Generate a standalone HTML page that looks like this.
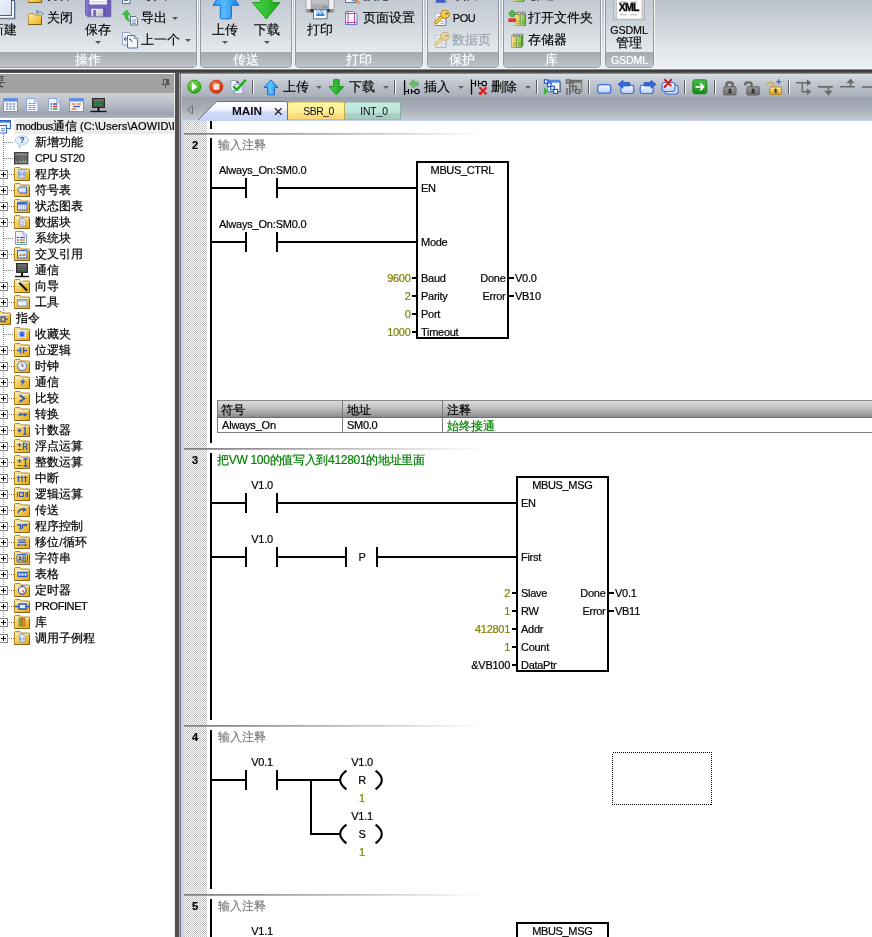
<!DOCTYPE html>
<html lang="zh">
<head>
<meta charset="utf-8">
<title>STEP 7-Micro/WIN SMART</title>
<style>
*{box-sizing:border-box;margin:0;padding:0}
html,body{width:872px;height:937px;overflow:hidden;background:#fff}
body{position:relative;font-family:"Liberation Sans",sans-serif;font-size:12px;color:#000}
.abs{position:absolute}
/* ---------- ribbon ---------- */
#ribbon{position:absolute;left:0;top:0;width:872px;height:69px;background:linear-gradient(to bottom,#bcc2cc 0,#cdd3da 24px,#e2e8eb 50px,#e9eff0 64px,#eef2f3 68px)}
.grp{position:absolute;top:-4px;height:72px;border:1px solid #9299a1;border-radius:0 0 4px 4px;background:linear-gradient(to bottom,#c2c8d1 0,#d1d7dd 28px,#e5eaed 55px);overflow:hidden;box-shadow:1px 0 0 #f4f7f8,-1px 0 0 #eef2f4,0 1px 0 #f4f7f8}
.grp .lbl{position:absolute;left:0;right:0;top:55px;height:16px;background:linear-gradient(to bottom,#a4a9ae 0,#b3b8bd 8px,#c1c5c9 16px);color:#fff;font-size:13px;line-height:16px;text-align:center;text-shadow:0 0 1px #e8ecef}
.rt{position:absolute;font-size:13px;line-height:15px;white-space:nowrap;color:#000;-webkit-text-stroke-width:.15px}
.dd{position:absolute;width:0;height:0;border-left:3px solid transparent;border-right:3px solid transparent;border-top:3px solid #555}
.ddw{position:absolute;width:0;height:0;border-left:3px solid transparent;border-right:3px solid transparent;border-top:3px solid #fff}
#rbar{position:absolute;left:0;top:69px;width:872px;height:4px;background:linear-gradient(to bottom,#8c8c8c 0 1px,#3c3c3c 1px 2px,#424242 2px 3px,#565656 3px 4px)}
/* ---------- left panel ---------- */
#lp{position:absolute;left:0;top:73px;width:175px;height:864px;background:#fff}
#lph{position:absolute;left:0;top:0;width:174px;height:20px;background:#a0a2a1;border-top:1px solid #f4f4f4}
#lpt{position:absolute;left:0;top:20px;width:174px;height:25px;background:linear-gradient(to bottom,#cdd1d7 0,#c0c5cd 8px,#a9b0ba 16px,#9ea5b0 20px,#a4abb5 23px,#b4b9c2 25px)}
#vbar{position:absolute;left:174px;top:73px;width:7px;height:864px;background:linear-gradient(to right,#e6e6e6 0 1px,#565656 1px 2px,#4d4d4d 2px 4px,#585858 4px 5px,#a2a2a2 5px 6px,#7a7a7a 6px 7px)}
.tr{position:absolute;left:0;height:16px;width:174px;white-space:nowrap;font-size:12px;line-height:16px;-webkit-text-stroke-width:.2px}
.tr .t{position:absolute;top:0;letter-spacing:-0.4px;font-size:11px}
.tr .c{position:absolute;top:0;font-size:12px;letter-spacing:0}
.pm{position:absolute;left:-1px;top:4px;width:9px;height:9px;border:1px solid #848484;background:#fff}
.pm:before{content:"";position:absolute;left:1px;top:3px;width:5px;height:1px;background:#000}
.pm:after{content:"";position:absolute;left:3px;top:1px;width:1px;height:5px;background:#000}
.hd{position:absolute;height:1px;top:8px;background-image:linear-gradient(to right,#808080 50%,transparent 50%);background-size:2px 1px}
.vd{position:absolute;width:1px;background-image:linear-gradient(to bottom,#808080 50%,transparent 50%);background-size:1px 2px}
.ic{position:absolute;left:15px;top:0;width:16px;height:16px}
/* ---------- editor ---------- */
#ed{position:absolute;left:181px;top:73px;width:691px;height:864px;background:#fff}
#tb{position:absolute;left:0;top:0;width:691px;height:47px;border-top:1px solid #85888e;box-shadow:inset 1px 0 0 rgba(255,255,255,.3);background:linear-gradient(to bottom,#dde0e5 0,#d6dae0 1px,#c9cdd5 6px,#bcc2cb 12px,#b1b7c1 18px,#aab0ba 22.5px,#9ca3ae 23.5px,#a0a7b1 29px,#a9afb9 35px,#b8bdc5 41px,#c6cad0 46px)}
.sep{position:absolute;top:6px;width:2px;height:14px;background:linear-gradient(to right,#5a5d63 50%,#f4f6f8 50%)}
.tt{position:absolute;top:5px;font-size:13px;line-height:15px;white-space:nowrap;color:#000;-webkit-text-stroke-width:.15px}
.tab{position:absolute;top:29px;height:17px;font-size:11.5px;line-height:17px;text-align:center;color:#101030}
#gut{position:absolute;left:3px;top:48px;width:23px;height:816px;background:conic-gradient(#c2c2c2 25%,#fff 0 50%,#c2c2c2 0 75%,#fff 0) 0 0/2px 2px}
#gl{position:absolute;left:0;top:47px;width:3px;height:817px;background:linear-gradient(to right,#c3d2f3 0,#c9d7f6 3px)}#bl{position:absolute;left:0;top:47px;width:691px;height:1px;background:#c3d3f5}
svg text{font-family:"Liberation Sans",sans-serif}

#lp,#ribbon,#ed,#dg{will-change:transform}

</style>
</head>
<body>
<svg width="0" height="0" style="position:absolute"><defs><linearGradient id="rfg" x1="0" y1="0" x2="1" y2="1"><stop offset="0" stop-color="#fdeaa0"/><stop offset=".5" stop-color="#f7cf5a"/><stop offset="1" stop-color="#e9ab1c"/></linearGradient><symbol id="rfold" viewBox="0 0 14 12"><path d="M.5 1.5q0-1 1-1h4l1.2 1.5h5.8q1 0 1 1v8.5H.5z" fill="url(#rfg)" stroke="#b89440" stroke-width="1"/><path d="M.5 11.5h13V4" stroke="#7a6018" stroke-width="1" fill="none"/></symbol><symbol id="kdoc" viewBox="0 0 16 16"><rect x="1.4" y="3.4" width="10.4" height="12" fill="#f7f9fd" stroke="#a9bbdc" stroke-width=".8"/><path d="M1.2 15.5h10.8V4" stroke="#5f7cae" stroke-width=".9" fill="none"/><path d="M3 6.5h4M3 9h4M6.5 11.5h3.5M6.5 13.5h3.5" stroke="#9db0d4" stroke-width=".9"/></symbol><symbol id="key" viewBox="0 0 16 16"><path d="M2.2 12.3L9 5.8" stroke="#b88208" stroke-width="3.6" stroke-linecap="round"/><path d="M2.2 12.3L9 5.8" stroke="#f8cc4c" stroke-width="2" stroke-linecap="round"/><ellipse cx="11" cy="4.3" rx="4.2" ry="3.9" fill="#f8c840" stroke="#b88208" stroke-width="1"/><path d="M8.5 3q2-2 4.5-1.3" stroke="#fdeaa0" stroke-width="1" fill="none"/><circle cx="12.5" cy="3.6" r="1" fill="#4a4a58"/></symbol><symbol id="books" viewBox="0 0 13 16"><path d="M.5 3.2h4.8v11.3H.5z" fill="#ecd070" stroke="#a88a2c" stroke-width=".7"/><path d="M.5 3.2L2 1.2h4.8L5.3 3.2z" fill="#fff" stroke="#555" stroke-width=".6"/><path d="M5.7 3.2h4.8v11.3H5.7z" fill="#92cc60" stroke="#5a8c2c" stroke-width=".7"/><path d="M5.7 3.2l1.5-2h4.8l-1.5 2z" fill="#fff" stroke="#555" stroke-width=".6"/><path d="M10.5 3.2l1.5-2v11.3l-1.5 2z" fill="#5c9a30" stroke="#4a7c24" stroke-width=".5"/><path d="M.8 10.3h4.2M.8 12.3h4.2" stroke="#b89838" stroke-width=".8"/><path d="M6 10.3h4.2M6 12.3h4.2" stroke="#64a038" stroke-width=".8"/><path d="M2.7 3l1.2-1.6M8 3l1.2-1.6" stroke="#222" stroke-width=".8"/><path d="M1.3 3.6v10.5" stroke="#f8e8a0" stroke-width=".9"/><path d="M6.5 3.6v10.5" stroke="#b8e090" stroke-width=".9"/></symbol></defs></svg>
<div id="ribbon">
<div class="grp" style="left:-3px;width:200px"><div class="lbl"><span style="position:absolute;left:60px;width:60px;text-align:center"><span>操作</span></span></div></div>
<div class="grp" style="left:200px;width:92px"><div class="lbl"><span style="position:absolute;left:15px;width:60px;text-align:center"><span>传送</span></span></div></div>
<div class="grp" style="left:295px;width:128px"><div class="lbl"><span style="position:absolute;left:32.5px;width:60px;text-align:center"><span>打印</span></span></div></div>
<div class="grp" style="left:427px;width:72px"><div class="lbl"><span style="position:absolute;left:4px;width:60px;text-align:center"><span>保护</span></span></div></div>
<div class="grp" style="left:503px;width:98px"><div class="lbl"><span style="position:absolute;left:17px;width:60px;text-align:center"><span>库</span></span></div></div>
<div class="grp" style="left:605px;width:49px"><div class="lbl"><span style="position:absolute;left:-6.5px;width:60px;text-align:center"><span style="font-size:10.6px;letter-spacing:-.1px">GSDML</span></span></div></div>
<svg class="abs" style="left:-14px;top:-10px" width="30" height="30" viewBox="0 0 30 30"><defs><linearGradient id="nd" x1="0" y1="0" x2="1" y2="1"><stop offset="0" stop-color="#ffffff"/><stop offset="1" stop-color="#d4e0f0"/></linearGradient></defs><rect x="3" y="10.5" width="25.5" height="17.8" fill="#fdfeff" stroke="#4a6282" stroke-width="1"/><rect x="0" y="0" width="25.5" height="25.5" fill="url(#nd)" stroke="#4a6282" stroke-width="1"/><path d="M29.5 12v17.3H5" stroke="#9aa2ac" stroke-width="1" fill="none" opacity=".6"/></svg>
<span class="rt" style="left:-9px;top:22px">新建</span>
<svg class="abs" style="left:28px;top:-9px" width="14" height="12" viewBox="0 0 14 12"><use href="#rfold"/></svg>
<span class="rt" style="left:47px;top:-13px">打开</span>
<svg class="abs" style="left:28px;top:13px" width="14" height="12" viewBox="0 0 14 12"><use href="#rfold"/></svg>
<svg class="abs" style="left:35px;top:9px" width="9" height="7" viewBox="0 0 9 7"><path d="M1 3h4.5q2.5 0 2.5 3" stroke="#5a7ab0" stroke-width="1" fill="none"/><path d="M3 1L1 3l2 2" stroke="#5a7ab0" stroke-width="1" fill="none"/></svg>
<span class="rt" style="left:47px;top:10px">关闭</span>
<svg class="abs" style="left:85px;top:-10px" width="27" height="28" viewBox="0 0 27 28"><defs><linearGradient id="flg" x1="0" y1="0" x2="1" y2="0"><stop offset="0" stop-color="#8a7fd0"/><stop offset=".12" stop-color="#7468c2"/><stop offset="1" stop-color="#6a5eb8"/></linearGradient><linearGradient id="shg" x1="0" y1="0" x2="1" y2="1"><stop offset="0" stop-color="#fafafa"/><stop offset="1" stop-color="#b9b9c0"/></linearGradient></defs><path d="M.4 0h25.4v26.4H2.6L.4 24.4z" fill="url(#flg)" stroke="#5d51a6" stroke-width=".8"/><rect x="4.3" y="-1" width="17.7" height="15.5" rx=".8" fill="#fbfbfd" stroke="#a9a2dc" stroke-width=".6"/><path d="M5.5 9.5h15.3M5.5 12h15.3" stroke="#c6c6cc" stroke-width="1"/><rect x="6.3" y="18.8" width="11.8" height="7.6" fill="url(#shg)"/><rect x="8.3" y="20" width="2.6" height="6.4" fill="#6f63be"/><rect x="18.6" y="19" width="2.4" height="7.4" fill="#5f54ae"/><path d="M2 27.3h24" stroke="#9a98b0" stroke-width="1" opacity=".5"/></svg>
<span class="rt" style="left:85px;top:22px">保存</span><div class="dd" style="left:95px;top:41px"></div>
<svg class="abs" style="left:122px;top:-8px" width="9" height="12" viewBox="0 0 9 12"><rect x=".5" y=".5" width="7.5" height="11" fill="#eef3fb" stroke="#5b7396"/><path d="M2 8.5h4" stroke="#5b7396"/></svg>
<span class="rt" style="left:141px;top:-13px">导入</span>
<svg class="abs" style="left:121px;top:9px" width="18" height="17" viewBox="0 0 18 17"><path d="M8 12.5C4.5 10.5 3.5 7.5 4 5L1 5.7 5.7 1 9.3 6.2 6.7 5.4C6.5 8 7 10 8.5 11.5z" fill="#3cc43c" stroke="#1f9a1f" stroke-width=".6"/><path d="M9.5 7.5h5l2 2v6.5h-7z" fill="#eef3fb" stroke="#5b7396"/><path d="M11 11h4M11 12.8h4M11 14.5h4" stroke="#7d93b5" stroke-width=".9"/></svg>
<span class="rt" style="left:141px;top:10px">导出</span><div class="dd" style="left:172px;top:16.5px"></div>
<svg class="abs" style="left:122px;top:31px" width="17" height="18" viewBox="0 0 17 18"><path d="M.5 1.5h7l3 3v9.5H.5z" fill="#f2f6fc" stroke="#8fa3c4"/><path d="M5.5 4.5h7l3 3v9.5h-10z" fill="#f6f9fd" stroke="#5b7396"/><path d="M12.5 4.5v3h3" fill="#d5dff0" stroke="#5b7396" stroke-width=".8"/><path d="M2 8h4M4 6L2 8l2 2" stroke="#3a5a90" stroke-width="1" fill="none"/><path d="M7 8q2.5 0 3 3" stroke="#3a5a90" stroke-width="1" fill="none"/></svg>
<span class="rt" style="left:141px;top:32px">上一个</span><div class="dd" style="left:185px;top:38.5px"></div>
<svg class="abs" style="left:210px;top:-10px" width="32" height="31" viewBox="0 0 32 31"><defs><linearGradient id="ub" x1="0" y1="0" x2="1" y2="0"><stop offset="0" stop-color="#2598f2"/><stop offset=".42" stop-color="#58bcff"/><stop offset="1" stop-color="#167fe6"/></linearGradient></defs><path d="M16 -4L29 15.3H21.5V27.6q0 1.3-1.3 1.3h-8.6q-1.3 0-1.3-1.3V15.3H3z" fill="url(#ub)" stroke="#1672d4" stroke-width="1"/></svg>
<span class="rt" style="left:212px;top:22px">上传</span><div class="dd" style="left:222px;top:41px"></div>
<svg class="abs" style="left:250px;top:-10px" width="32" height="31" viewBox="0 0 32 31"><defs><linearGradient id="db" x1="0" y1="0" x2="1" y2="0"><stop offset="0" stop-color="#3fd23f"/><stop offset=".5" stop-color="#35c235"/><stop offset="1" stop-color="#1f9f1f"/></linearGradient></defs><path d="M10.5 0h11.5v12.5h8L16.3 29 2.5 12.5h8z" fill="url(#db)" stroke="#1d9c1d" stroke-width="1"/></svg>
<span class="rt" style="left:254px;top:22px">下载</span><div class="dd" style="left:264px;top:41px"></div>
<svg class="abs" style="left:305px;top:-10px" width="30" height="30" viewBox="0 0 30 30"><defs><linearGradient id="prg" x1="0" y1="0" x2="0" y2="1"><stop offset="0" stop-color="#d4d4d6"/><stop offset=".7" stop-color="#bcbcbe"/><stop offset="1" stop-color="#a4a4a8"/></linearGradient></defs><rect x="1" y="0" width="28" height="22.4" rx="1.2" fill="#f1f1f3" stroke="#9c9ea6" stroke-width=".8"/><rect x="6.3" y="0" width="17.4" height="19" fill="url(#prg)"/><path d="M6.3 0v19M23.7 0v19" stroke="#8e9098" stroke-width=".8"/><rect x="6.3" y="15.3" width="17.4" height="3.7" fill="#a9a9ae"/><rect x="18" y="16.6" width="4.6" height="1.6" fill="#4d9af2"/><rect x="1.4" y="19" width="27.2" height="3.2" fill="#8c8c90"/><rect x="5.6" y="19" width="2.6" height="3.2" fill="#2c2c2e"/><rect x="21.8" y="19" width="2.6" height="3.2" fill="#2c2c2e"/><path d="M3 9.5h1.5M24.5 5.5h1.8M24.5 7.6h1.8M24.5 9.7h1.8" stroke="#b8b8be" stroke-width=".9"/><rect x="8.5" y="19.6" width="13.5" height="9.2" fill="#fbfcfe" stroke="#546c90" stroke-width="1"/><rect x="10.8" y="19.8" width="9" height="6.2" fill="#a8d8f8"/><path d="M10.8 26l2.5-3 2 1.6 2-1.8 2.5 3.2z" fill="#3f78d8"/><path d="M15.3 20.2l1 1.8 1-1.8z" fill="#f05a3c"/></svg>
<span class="rt" style="left:307px;top:22px">打印</span>
<svg class="abs" style="left:345px;top:-9px" width="16" height="13" viewBox="0 0 16 13"><rect x=".5" y=".5" width="10" height="11" fill="#f4f7fc" stroke="#5b7396"/><circle cx="9" cy="7" r="3" fill="#e8f0fa" stroke="#6a7890"/><path d="M11 9l3.5 3.5" stroke="#d89030" stroke-width="2"/></svg>
<span class="rt" style="left:363px;top:-13px">预览</span>
<svg class="abs" style="left:345px;top:11px" width="13" height="14" viewBox="0 0 13 14"><path d="M.5.5h8.5l3 3v10H.5z" fill="#fbfcfe" stroke="#6f86ac"/><path d="M3 .5v13M9.5 1.5v12M.5 2.5h10M.5 11.5h11.5" stroke="#b636b6" stroke-width=".9"/></svg>
<span class="rt" style="left:363px;top:10px">页面设置</span>
<svg class="abs" style="left:434px;top:-13px" width="16" height="16" viewBox="0 0 16 16"><use href="#kdoc"/><rect x="2" y="9" width="9" height="6.5" fill="#4a5cc8"/></svg>
<span class="rt" style="left:453px;top:-13px">项目</span>
<svg class="abs" style="left:434px;top:10px" width="16" height="16" viewBox="0 0 16 16"><use href="#kdoc"/><use href="#key"/></svg>
<span class="rt" style="left:452.8px;top:11px;font-size:11px;letter-spacing:-.5px">POU</span>
<svg class="abs" style="left:434px;top:32px;opacity:.5" width="16" height="16" viewBox="0 0 16 16"><use href="#kdoc"/><use href="#key"/></svg>
<span class="rt" style="left:452px;top:32px;color:#9aa3ad">数据页</span>
<svg class="abs" style="left:513px;top:-13px" width="13" height="16" viewBox="0 0 13 16"><use href="#books"/></svg>
<span class="rt" style="left:528px;top:-13px">创建</span>
<svg class="abs" style="left:508px;top:10px" width="18" height="16" viewBox="0 0 18 16"><g transform="translate(4.2,1)"><use href="#books"/></g><path d="M.8 3.7h6.8M4.2 .3v6.8" stroke="#2c8c2c" stroke-width="3"/><path d="M1.3 3.7h5.8M4.2 .8v5.8" stroke="#5cc45c" stroke-width="1.6"/><rect x=".8" y="8.8" width="6.8" height="3" fill="#e83818" stroke="#b82008" stroke-width=".5"/></svg>
<span class="rt" style="left:528px;top:10px">打开文件夹</span>
<svg class="abs" style="left:511px;top:33px" width="13" height="16" viewBox="0 0 13 16"><use href="#books"/></svg>
<span class="rt" style="left:528px;top:32px">存储器</span>
<svg class="abs" style="left:613px;top:-10px" width="32" height="31" viewBox="0 0 32 31"><rect x=".5" y="-1" width="31" height="30.7" fill="#d0d4de" stroke="#aeb3be"/><rect x="3.3" y="-1" width="25.7" height="30.2" fill="#fdfdfe" stroke="#b9b4b4" stroke-width=".8"/><path d="M7 12h6.5M17.5 12h6.5M7 24.7h6.5M17.5 24.7h6.5" stroke="#c2c0c2" stroke-width="1.3"/><text x="15.8" y="21" font-size="10.5" font-weight="bold" text-anchor="middle" letter-spacing="-.7" fill="#0a0a0a" stroke="#0a0a0a" stroke-width=".35" font-family="Liberation Sans">XML</text></svg>
<span class="rt" style="left:599px;top:23.5px;width:60px;text-align:center;font-size:10.7px;letter-spacing:-.1px;line-height:13px">GSDML</span>
<span class="rt" style="left:599px;top:35px;width:60px;text-align:center">管理</span>
</div>
<div id="rbar"></div>
<div id="lp">
<svg width="0" height="0" style="position:absolute"><defs><linearGradient id="fg" x1="0" y1="0" x2="1" y2="1"><stop offset="0" stop-color="#fbe9a8"/><stop offset=".55" stop-color="#f3c750"/><stop offset="1" stop-color="#e2a414"/></linearGradient><symbol id="fold" viewBox="0 0 16 16"><path d="M.5 2.5q0-1 1-1h4.5l1.5 1.5h7q1 0 1 1v10.5H.5z" fill="url(#fg)" stroke="#b88a1e" stroke-width="1"/><path d="M1.5 4.5h13" stroke="#fdf3c8" stroke-width="1"/><path d="M.5 14.5h15V5" stroke="#8a6612" stroke-width="1" fill="none"/></symbol></defs></svg>
<div id="lph"><span class="abs" style="left:-8px;top:0;font-size:13px;line-height:15px;color:#2c3238">要</span><svg class="abs" style="left:162px;top:5px" width="8" height="9" viewBox="0 0 8 9" shape-rendering="crispEdges"><path d="M1.5 0.5h4.5v5h-4.5z" fill="none" stroke="#555" stroke-width="1"/><path d="M5 1v4" stroke="#555" stroke-width="1.4"/><path d="M0 5.5h7.5" stroke="#555" stroke-width="1.2"/><path d="M3.5 6v2.5" stroke="#555" stroke-width="1"/></svg></div>
<div id="lpt"><svg class="abs" style="left:3px;top:5px" width="15" height="14" viewBox="0 0 15 14"><rect x=".5" y=".5" width="14" height="13" fill="#f4f7fd" stroke="#6f93dc"/><rect x="1" y="1" width="13" height="2.5" fill="#5b8ae6"/><path d="M3 6h2.2M6.4 6h2.2M9.8 6H12M3 8.5h2.2M6.4 8.5h2.2M9.8 8.5H12M3 11h2.2M6.4 11h2.2M9.8 11H12" stroke="#8795bd" stroke-width="1.3"/></svg><svg class="abs" style="left:26px;top:5px" width="13" height="14" viewBox="0 0 13 14"><path d="M.5.5h8l3.5 3.5v9.5H.5z" fill="#f4f7fd" stroke="#8aa4dc"/><path d="M8.5.5V4H12" fill="#d5e0f6" stroke="#8aa4dc" stroke-width=".8"/><path d="M2.5 5.5h3M6.5 5.5h3M2.5 7.5h3M6.5 7.5h3M2.5 9.5h3M6.5 9.5h3M2.5 11.5h3M6.5 11.5h3" stroke="#7f93c8" stroke-width="1"/></svg><svg class="abs" style="left:48px;top:5px" width="13" height="14" viewBox="0 0 13 14"><path d="M.5.5h8l3.5 3.5v9.5H.5z" fill="#f4f7fd" stroke="#8aa4dc"/><path d="M8.5.5V4H12" fill="#d5e0f6" stroke="#8aa4dc" stroke-width=".8"/><path d="M2.5 6h1.5M5 6h4.5" stroke="#2a4fd0" stroke-width="1.3"/><path d="M2.5 8.5h1.5M5 8.5h4.5" stroke="#e03030" stroke-width="1.3"/><path d="M2.5 11h1.5M5 11h4.5" stroke="#28a028" stroke-width="1.3"/></svg><svg class="abs" style="left:69px;top:5px" width="15" height="14" viewBox="0 0 15 14"><rect x=".5" y=".5" width="14" height="13" fill="#f4f7fd" stroke="#6f93dc"/><rect x="1" y="1" width="13" height="2.5" fill="#5b8ae6"/><path d="M2.5 6h4" stroke="#f07820" stroke-width="1.4"/><path d="M8 6h4" stroke="#f07820" stroke-width="1.4"/><path d="M4 8.5h7" stroke="#3b66e0" stroke-width="1.4"/><path d="M2.5 11h5" stroke="#f07820" stroke-width="1.4"/></svg><svg class="abs" style="left:90px;top:5px" width="17" height="15" viewBox="0 0 17 15"><rect x="2.5" y=".5" width="12" height="9" fill="#4c4c4c" stroke="#2c2c2c"/><rect x="3.5" y="1.5" width="10" height="1.6" fill="#7c7c7c"/><path d="M4.5 4.7h8M4.5 7h8" stroke="#2f9a3c" stroke-width="1.3" stroke-dasharray="2.2 .6"/><path d="M8.5 10v3" stroke="#111" stroke-width="2"/><path d="M.5 13.5h16" stroke="#111" stroke-width="1.3"/></svg></div>
<div id="tree">
<div class="vd" style="left:3px;top:61px;height:505px"></div>
<div class="tr" style="top:45px"><div class="abs" style="left:14px;top:1px;width:160px;height:15px;background:#ececec"></div><svg class="abs" style="left:-2px;top:1px" width="14" height="15" viewBox="0 0 14 15"><rect x=".5" y="1.5" width="12" height="8" fill="#f4f8fe" stroke="#2f62c8"/><rect x="1" y="2" width="11" height="1.6" fill="#3f74dc"/><rect x="1.5" y="6.5" width="7" height="7.5" fill="#fbfcff" stroke="#2f62c8"/><path d="M3 9.5h4M3 11.5h4" stroke="#6f8fd0" stroke-width="1"/></svg><span class="t" style="left:16px">modbus<span style="font-size:12px;letter-spacing:0">通信</span><span style="letter-spacing:.12px"> (C:\Users\AOWID\IC</span></span></div>
<div class="tr" style="top:61px">
<div class="hd" style="left:4px;width:10px"></div>
<svg class="ic" style="left:14px" width="17" height="16" viewBox="0 0 17 16"><path d="M8.5 1.5c4 0 7 2 7 4.6s-3 4.5-6.2 4.6c-1.3 1.5-2.5 2.6-4 3.3.5-1.2.7-2.4.6-3.5C3 9.8 1.5 8.2 1.5 6.1c0-2.6 3-4.6 7-4.6z" fill="#e4f1f8" stroke="#9fc3d8" stroke-width="1"/><text x="8.6" y="9" font-size="9" font-weight="bold" fill="#2a44b0" text-anchor="middle" font-family="Liberation Sans">?</text></svg>
<span class="c" style="left:35px">新增功能</span>
</div>
<div class="tr" style="top:77px">
<div class="hd" style="left:4px;width:10px"></div>
<svg class="ic" style="left:14px" width="16" height="16" viewBox="0 0 16 16"><rect x="0.5" y="2.5" width="13.5" height="11.5" fill="#5d5d5d" stroke="#3e3e3e"/><rect x="1.5" y="3.5" width="11.5" height="2" fill="#8a8a8a"/><rect x="1.5" y="11" width="2" height="2" fill="#8a8a8a"/><rect x="4.5" y="11" width="8.5" height="2" fill="#8a8a8a"/><path d="M5 7.5h7M5 10h7" stroke="#19e019" stroke-width="1.2" stroke-dasharray="1.3 .7"/><path d="M14.5 4v10.5H2" stroke="#b8b8b8" fill="none"/></svg>
<span class="t" style="left:35px">CPU ST20</span>
</div>
<div class="tr" style="top:93px">
<div class="pm"></div><div class="hd" style="left:9px;width:5px"></div>
<svg class="ic" style="left:14px" width="16" height="16" viewBox="0 0 16 16"><use href="#fold"/><g transform="translate(0,-1)"><path d="M4.5 4.5h5l2 2v6.5h-7z" fill="#c9d6ee" stroke="#8098c8" stroke-width=".8"/><path d="M6 7v4M10 7v4M6 9h1.5M8.5 9H10" stroke="#6f8fd0" stroke-width="1" fill="none"/></g></svg>
<span class="c" style="left:35px">程序块</span>
</div>
<div class="tr" style="top:109px">
<div class="pm"></div><div class="hd" style="left:9px;width:5px"></div>
<svg class="ic" style="left:14px" width="16" height="16" viewBox="0 0 16 16"><use href="#fold"/><g transform="translate(0,-1)"><path d="M3.5 9l2.5-3h6.5v6H6z" fill="#d5e0f6" stroke="#3b62c4" stroke-width="1"/><circle cx="5.6" cy="9" r=".8" fill="#fff"/></g></svg>
<span class="c" style="left:35px">符号表</span>
</div>
<div class="tr" style="top:125px">
<div class="pm"></div><div class="hd" style="left:9px;width:5px"></div>
<svg class="ic" style="left:14px" width="16" height="16" viewBox="0 0 16 16"><use href="#fold"/><g transform="translate(0,-1)"><rect x="3.5" y="5.5" width="9.5" height="7.5" fill="#e6ecf8" stroke="#3b66cc" stroke-width="1"/><rect x="4" y="6" width="8.5" height="1.6" fill="#3b66cc"/><path d="M6.2 8v4.5M8.4 8v4.5M10.6 8v4.5" stroke="#a8b8d8" stroke-width=".8"/></g></svg>
<span class="c" style="left:35px">状态图表</span>
</div>
<div class="tr" style="top:141px">
<div class="pm"></div><div class="hd" style="left:9px;width:5px"></div>
<svg class="ic" style="left:14px" width="16" height="16" viewBox="0 0 16 16"><use href="#fold"/><g transform="translate(0,-1)"><path d="M5.5 5.5h4l2 2v5.5h-6z" fill="#dfe7f6" stroke="#8098c8" stroke-width=".8"/><path d="M6.5 8.5h3.5M6.5 10h3.5M6.5 11.5h3.5" stroke="#a8b8d8" stroke-width=".7"/></g></svg>
<span class="c" style="left:35px">数据块</span>
</div>
<div class="tr" style="top:157px">
<div class="hd" style="left:4px;width:10px"></div>
<svg class="ic" style="left:14px" width="16" height="16" viewBox="0 0 16 16"><path d="M1.5 1.5h7.5l3.5 3.5v9.5h-11z" fill="#f4f7fd" stroke="#7f9bd4"/><path d="M9 1.5v3.5h3.5" fill="#dbe5f8" stroke="#7f9bd4" stroke-width=".8"/><path d="M3 7.5h2" stroke="#2a4fd0" stroke-width="1.2"/><path d="M6 7.5h5" stroke="#2a4fd0" stroke-width="1.2"/><path d="M3 10h2M6 10h5" stroke="#e03030" stroke-width="1.2"/><path d="M3 12.5h2M6 12.5h5" stroke="#28a028" stroke-width="1.2"/></svg>
<span class="c" style="left:35px">系统块</span>
</div>
<div class="tr" style="top:173px">
<div class="pm"></div><div class="hd" style="left:9px;width:5px"></div>
<svg class="ic" style="left:14px" width="16" height="16" viewBox="0 0 16 16"><use href="#fold"/><g transform="translate(0,-1)"><rect x="3.5" y="5.5" width="9.5" height="7.5" fill="#dfe9f8" stroke="#3b66cc" stroke-width="1"/><path d="M4.5 11l2-2.5 2 1.5 2-2 2 3z" fill="#e0905a"/></g></svg>
<span class="c" style="left:35px">交叉引用</span>
</div>
<div class="tr" style="top:189px">
<div class="hd" style="left:4px;width:10px"></div>
<svg class="ic" style="left:14px" width="16" height="16" viewBox="0 0 16 16"><rect x="2.5" y="1.5" width="11" height="9" fill="#4c4c4c" stroke="#2c2c2c"/><rect x="3.5" y="2.5" width="9" height="1.5" fill="#7c7c7c"/><path d="M4 5.5h8M4 7.7h8" stroke="#2f9a3c" stroke-width="1.2" stroke-dasharray="2 .6"/><path d="M8 11v3" stroke="#111" stroke-width="2"/><path d="M1 14.5h14" stroke="#111" stroke-width="1.4"/></svg>
<span class="c" style="left:35px">通信</span>
</div>
<div class="tr" style="top:205px">
<div class="pm"></div><div class="hd" style="left:9px;width:5px"></div>
<svg class="ic" style="left:14px" width="16" height="16" viewBox="0 0 16 16"><use href="#fold"/><g transform="translate(0,-1)"><path d="M5 5.5l8 8" stroke="#111" stroke-width="2.2"/><path d="M3.5 3.5l2 2" stroke="#fff" stroke-width="1.6"/><path d="M8 2.5v2M7 3.5h2M3 7.5h2M4 6.5v2" stroke="#fff" stroke-width=".8"/></g></svg>
<span class="c" style="left:35px">向导</span>
</div>
<div class="tr" style="top:221px">
<div class="pm"></div><div class="hd" style="left:9px;width:5px"></div>
<svg class="ic" style="left:14px" width="16" height="16" viewBox="0 0 16 16"><use href="#fold"/><g transform="translate(0,-1)"><rect x="3.5" y="6.5" width="9.5" height="6.5" fill="#e9eef8" stroke="#7f95c8" stroke-width="1"/><rect x="4" y="7" width="8.5" height="1.5" fill="#a9bbe2"/></g></svg>
<span class="c" style="left:35px">工具</span>
</div>
<div class="tr" style="top:237px">
<svg class="abs" style="left:-5px;top:0" width="16" height="16" viewBox="0 0 16 16"><use href="#fold"/><path d="M6 7h4v4.5H6zM10 9h2.5" stroke="#2a56c6" stroke-width="1.3" fill="none"/></svg>
<span class="c" style="left:16px">指令</span></div>
<div class="tr" style="top:253px">
<div class="hd" style="left:4px;width:10px"></div>
<svg class="ic" style="left:14px" width="16" height="16" viewBox="0 0 16 16"><use href="#fold"/><g transform="translate(0,-1)"><rect x="4" y="5.5" width="8" height="7.5" fill="#e6ecfb"/><path d="M8 6v6.5M4.8 9.2h6.4M5.6 6.9l4.8 4.7M10.4 6.9l-4.8 4.7" stroke="#2d5be0" stroke-width="1.1"/></g></svg>
<span class="c" style="left:35px">收藏夹</span>
</div>
<div class="tr" style="top:269px">
<div class="pm"></div><div class="hd" style="left:9px;width:5px"></div>
<svg class="ic" style="left:14px" width="16" height="16" viewBox="0 0 16 16"><use href="#fold"/><g transform="translate(0,-1)"><path d="M3 9.5h3M10 9.5h3M6.5 6.5v6M9.5 6.5v6" stroke="#2a56c6" stroke-width="1.3" fill="none"/></g></svg>
<span class="c" style="left:35px">位逻辑</span>
</div>
<div class="tr" style="top:285px">
<div class="pm"></div><div class="hd" style="left:9px;width:5px"></div>
<svg class="ic" style="left:14px" width="16" height="16" viewBox="0 0 16 16"><use href="#fold"/><g transform="translate(0,-1)"><circle cx="8" cy="9" r="4.6" fill="#e8ecf4" stroke="#7b88a8" stroke-width="1.2"/><path d="M8 6.2V9h2" stroke="#555" stroke-width=".9" fill="none"/></g></svg>
<span class="c" style="left:35px">时钟</span>
</div>
<div class="tr" style="top:301px">
<div class="pm"></div><div class="hd" style="left:9px;width:5px"></div>
<svg class="ic" style="left:14px" width="16" height="16" viewBox="0 0 16 16"><use href="#fold"/><g transform="translate(0,-1)"><path d="M10 5l-4 4.5h2.5L7 13l4.5-5H9z" fill="#2a56c6"/></g></svg>
<span class="c" style="left:35px">通信</span>
</div>
<div class="tr" style="top:317px">
<div class="pm"></div><div class="hd" style="left:9px;width:5px"></div>
<svg class="ic" style="left:14px" width="16" height="16" viewBox="0 0 16 16"><use href="#fold"/><g transform="translate(0,-1)"><path d="M5.5 6l5 3.5-5 3.5" stroke="#2a56c6" stroke-width="1.7" fill="none"/></g></svg>
<span class="c" style="left:35px">比较</span>
</div>
<div class="tr" style="top:333px">
<div class="pm"></div><div class="hd" style="left:9px;width:5px"></div>
<svg class="ic" style="left:14px" width="16" height="16" viewBox="0 0 16 16"><use href="#fold"/><g transform="translate(0,-1)"><path d="M3.5 10.5l3-3 3 3zM8 8.5l3 3 3-3z" fill="#2a56c6"/></g></svg>
<span class="c" style="left:35px">转换</span>
</div>
<div class="tr" style="top:349px">
<div class="pm"></div><div class="hd" style="left:9px;width:5px"></div>
<svg class="ic" style="left:14px" width="16" height="16" viewBox="0 0 16 16"><use href="#fold"/><g transform="translate(0,-1)"><path d="M3.5 9.5h4M5.5 7.5v4" stroke="#2a56c6" stroke-width="1.3"/><path d="M9.5 7.5l1.5-1v6.5M9.5 13h3" stroke="#2a56c6" stroke-width="1.3" fill="none"/></g></svg>
<span class="c" style="left:35px">计数器</span>
</div>
<div class="tr" style="top:365px">
<div class="pm"></div><div class="hd" style="left:9px;width:5px"></div>
<svg class="ic" style="left:14px" width="16" height="16" viewBox="0 0 16 16"><use href="#fold"/><g transform="translate(0,-1)"><path d="M3.5 8h4M5.5 6v4M3.5 12.5h4" stroke="#2a56c6" stroke-width="1.1"/><path d="M9.5 13V6h2q1.5 0 1.5 1.7t-1.5 1.8h-2m2 0l1.7 3.5" stroke="#2a56c6" stroke-width="1.2" fill="none"/></g></svg>
<span class="c" style="left:35px">浮点运算</span>
</div>
<div class="tr" style="top:381px">
<div class="pm"></div><div class="hd" style="left:9px;width:5px"></div>
<svg class="ic" style="left:14px" width="16" height="16" viewBox="0 0 16 16"><use href="#fold"/><g transform="translate(0,-1)"><path d="M3.5 8h4M5.5 6v4M3.5 12.5h4" stroke="#2a56c6" stroke-width="1.1"/><path d="M9.5 6h4M9.5 13h4M11.5 6v7" stroke="#2a56c6" stroke-width="1.3" fill="none"/></g></svg>
<span class="c" style="left:35px">整数运算</span>
</div>
<div class="tr" style="top:397px">
<div class="pm"></div><div class="hd" style="left:9px;width:5px"></div>
<svg class="ic" style="left:14px" width="16" height="16" viewBox="0 0 16 16"><use href="#fold"/><g transform="translate(0,-1)"><path d="M4.5 13V8M8 13V8M11.5 13V8" stroke="#2a56c6" stroke-width="1.2"/><path d="M2.8 9l1.7-2.5L6.2 9zM6.3 9L8 6.5 9.7 9zM9.8 9l1.7-2.5L13.2 9z" fill="#2a56c6"/></g></svg>
<span class="c" style="left:35px">中断</span>
</div>
<div class="tr" style="top:413px">
<div class="pm"></div><div class="hd" style="left:9px;width:5px"></div>
<svg class="ic" style="left:14px" width="16" height="16" viewBox="0 0 16 16"><use href="#fold"/><g transform="translate(0,-1)"><path d="M3.5 7v5M12 7v5M13.5 7v5" stroke="#2a56c6" stroke-width="1.1"/><rect x="5.6" y="7.5" width="3.8" height="4" fill="none" stroke="#2a56c6" stroke-width="1.1"/></g></svg>
<span class="c" style="left:35px">逻辑运算</span>
</div>
<div class="tr" style="top:429px">
<div class="pm"></div><div class="hd" style="left:9px;width:5px"></div>
<svg class="ic" style="left:14px" width="16" height="16" viewBox="0 0 16 16"><use href="#fold"/><g transform="translate(0,-1)"><path d="M4 12q1-4.5 6.5-3.5" stroke="#2a56c6" stroke-width="1.4" fill="none"/><path d="M9.5 6.5l3.3 2.5-3.8 1.8z" fill="#2a56c6"/></g></svg>
<span class="c" style="left:35px">传送</span>
</div>
<div class="tr" style="top:445px">
<div class="pm"></div><div class="hd" style="left:9px;width:5px"></div>
<svg class="ic" style="left:14px" width="16" height="16" viewBox="0 0 16 16"><use href="#fold"/><g transform="translate(0,-1)"><path d="M3 8h3.5v3.5M8.5 11.5V8H12" stroke="#2a56c6" stroke-width="1.3" fill="none"/><path d="M4.8 10.8h3.4l-1.7 2.2zM11.5 6.3l2.2 1.7-2.2 1.7z" fill="#2a56c6"/></g></svg>
<span class="c" style="left:35px">程序控制</span>
</div>
<div class="tr" style="top:461px">
<div class="pm"></div><div class="hd" style="left:9px;width:5px"></div>
<svg class="ic" style="left:14px" width="16" height="16" viewBox="0 0 16 16"><use href="#fold"/><g transform="translate(0,-1)"><path d="M5 5.5v4M7 5.5v4M9 5.5v4M11 5.5v4M4.5 9.5h7M4.5 12h7" stroke="#2a56c6" stroke-width=".9"/><path d="M3 12l2-1.5v3zM13 12l-2-1.5v3z" fill="#2a56c6"/></g></svg>
<span class="c" style="left:35px">移位<span style="font-size:11px;letter-spacing:0;padding:0 .5px">/</span>循环</span>
</div>
<div class="tr" style="top:477px">
<div class="pm"></div><div class="hd" style="left:9px;width:5px"></div>
<svg class="ic" style="left:14px" width="16" height="16" viewBox="0 0 16 16"><use href="#fold"/><g transform="translate(0,-1)"><rect x="3" y="5.5" width="10.5" height="7.5" rx="1" fill="none" stroke="#2a56c6" stroke-width=".9"/><path d="M4.5 12l1.5-5 1.5 5M5 10.5h2M9 12V7h1.5q1 0 1 1.2t-1 1.3H9h1.7q1 0 1 1.3t-1 1.2z" stroke="#2a56c6" stroke-width=".9" fill="none"/></g></svg>
<span class="c" style="left:35px">字符串</span>
</div>
<div class="tr" style="top:493px">
<div class="pm"></div><div class="hd" style="left:9px;width:5px"></div>
<svg class="ic" style="left:14px" width="16" height="16" viewBox="0 0 16 16"><use href="#fold"/><g transform="translate(0,-1)"><rect x="4" y="7.5" width="9" height="4" fill="#dfe7fa" stroke="#2a56c6" stroke-width="1.2"/><path d="M7 7.5v4M10 7.5v4" stroke="#2a56c6" stroke-width="1"/></g></svg>
<span class="c" style="left:35px">表格</span>
</div>
<div class="tr" style="top:509px">
<div class="pm"></div><div class="hd" style="left:9px;width:5px"></div>
<svg class="ic" style="left:14px" width="16" height="16" viewBox="0 0 16 16"><use href="#fold"/><g transform="translate(0,-1)"><circle cx="8.3" cy="9.3" r="3.8" fill="#f2f4fa" stroke="#2a56c6" stroke-width="1.1"/><path d="M8.3 9.3l2 2" stroke="#d02020" stroke-width="1.1"/><path d="M7.3 4.8h2" stroke="#2a56c6" stroke-width="1"/></g></svg>
<span class="c" style="left:35px">定时器</span>
</div>
<div class="tr" style="top:525px">
<div class="pm"></div><div class="hd" style="left:9px;width:5px"></div>
<svg class="ic" style="left:14px" width="16" height="16" viewBox="0 0 16 16"><use href="#fold"/><g transform="translate(0,-1)"><path d="M1 9.5h4M12 9.5h3" stroke="#2a56c6" stroke-width="1.3"/><rect x="5" y="7" width="7" height="5" fill="#e8eefc" stroke="#2a56c6" stroke-width="1.5"/></g></svg>
<span class="t" style="left:35px">PROFINET</span>
</div>
<div class="tr" style="top:541px">
<div class="pm"></div><div class="hd" style="left:9px;width:5px"></div>
<svg class="ic" style="left:14px" width="16" height="16" viewBox="0 0 16 16"><use href="#fold"/><g transform="translate(0,-1)"><rect x="5" y="5" width="2.8" height="8" fill="#7fa83a" stroke="#5b7f24" stroke-width=".6"/><rect x="8.2" y="5" width="2.8" height="8" fill="#d88a2a" stroke="#a86414" stroke-width=".6"/></g></svg>
<span class="c" style="left:35px">库</span>
</div>
<div class="tr" style="top:557px">
<div class="pm"></div><div class="hd" style="left:9px;width:5px"></div>
<svg class="ic" style="left:14px" width="16" height="16" viewBox="0 0 16 16"><use href="#fold"/><g transform="translate(0,-1)"><path d="M5.5 5.5h4l2 2v5.5h-6z" fill="#dfe7f6" stroke="#8098c8" stroke-width=".8"/><path d="M6.5 8.5v3M10 8.5v3M6.5 10h1.2M8.8 10H10" stroke="#6f8fd0" stroke-width=".8" fill="none"/></g></svg>
<span class="c" style="left:35px">调用子例程</span>
</div>
</div>
</div>
<div id="vbar"></div>
<div id="ed">
<div id="tb">
<svg class="abs" style="left:6px;top:5px" width="15" height="15" viewBox="0 0 15 15"><defs><radialGradient id="pg" cx=".4" cy=".3" r=".8"><stop offset="0" stop-color="#86d84a"/><stop offset=".6" stop-color="#4cbc2c"/><stop offset="1" stop-color="#129a12"/></radialGradient></defs><circle cx="7.3" cy="7.7" r="6.6" fill="url(#pg)" stroke="#12a012" stroke-width=".8"/><path d="M4.9 3.2v9l5.3-4.5z" fill="#fff"/></svg>
<svg class="abs" style="left:28px;top:5px" width="15" height="15" viewBox="0 0 15 15"><defs><radialGradient id="sg" cx=".4" cy=".3" r=".8"><stop offset="0" stop-color="#f8784c"/><stop offset=".6" stop-color="#e04418"/><stop offset="1" stop-color="#b82808"/></radialGradient></defs><circle cx="7.3" cy="7.7" r="6.6" fill="url(#sg)" stroke="#c83010" stroke-width=".8"/><rect x="4.4" y="4.8" width="5.8" height="6" rx=".6" fill="#fbe6de"/></svg>
<svg class="abs" style="left:49px;top:4px" width="17" height="17" viewBox="0 0 17 17"><path d="M.8 2.5h5.8l2.4 2.4v7.6H.8z" fill="#f2f6fc" stroke="#8c9cbc" stroke-width=".9"/><path d="M6.6 2.5v2.4H9z" fill="#1a2440"/><path d="M4.7 6.3h5.8l2.2 2.2v7.3h-8z" fill="#e9f0fb" stroke="#8c9cbc" stroke-width=".9"/><path d="M3.2 8.2l3.6 3.6L15.8 1.8" stroke="#18a818" stroke-width="2.3" fill="none"/></svg>
<div class="sep" style="left:71px"></div>
<svg class="abs" style="left:81.5px;top:4.5px" width="16" height="17" viewBox="0 0 16 17"><defs><linearGradient id="ua" x1="0" y1="0" x2="1" y2="0"><stop offset="0" stop-color="#229ef6"/><stop offset=".45" stop-color="#62c6ff"/><stop offset="1" stop-color="#1686ec"/></linearGradient></defs><path d="M8 .9L15 8.5h-3.6v7.3H4.6V8.5H1z" fill="url(#ua)" stroke="#146cd0" stroke-width="1"/></svg>
<span class="tt" style="left:101.5px">上传</span>
<div class="dd" style="left:135px;top:12px;border-top-color:#5f6368"></div>
<svg class="abs" style="left:147px;top:5px" width="17" height="16" viewBox="0 0 17 16"><defs><linearGradient id="da" x1="0" y1="0" x2="1" y2="0"><stop offset="0" stop-color="#48d648"/><stop offset="1" stop-color="#1c9c1c"/></linearGradient></defs><path d="M5.7 .7h5.4v6.9h4.5L8.4 15.7 1.2 7.6h4.5z" fill="url(#da)" stroke="#179417" stroke-width="1"/></svg>
<span class="tt" style="left:168px">下载</span>
<div class="dd" style="left:202px;top:12px;border-top-color:#5f6368"></div>
<div class="sep" style="left:213px"></div>
<svg class="abs" style="left:222px;top:5px" width="18" height="16" viewBox="0 0 18 16"><path d="M1.6 1.3v14.7" stroke="#000" stroke-width="1.3"/><path d="M2 12.5h3M5.5 10v5M8.5 10v5M9 12.5h2.5" stroke="#000" stroke-width="1.1"/><circle cx="14" cy="12.5" r="2.2" fill="none" stroke="#000" stroke-width="1.1"/><path d="M6.3 4.7L11 .6v2.3h4.2v3.8H11v2.3z" fill="#62bc62" stroke="#48a848" stroke-width=".6"/></svg>
<span class="tt" style="left:243px">插入</span>
<div class="dd" style="left:277px;top:12px;border-top-color:#5f6368"></div>
<svg class="abs" style="left:289px;top:5px" width="18" height="16" viewBox="0 0 18 16"><path d="M1.5 .5v15" stroke="#000" stroke-width="1.3"/><path d="M2 4.5h3M5.5 1.5v6M8.5 1.5v6M9 4.5h2.5" stroke="#000" stroke-width="1.2"/><circle cx="14.2" cy="4.5" r="2.3" fill="none" stroke="#000" stroke-width="1.1"/><path d="M9.5 8.3l7 7M16.5 8.3L9.8 15.3" stroke="#e81818" stroke-width="2.1"/><circle cx="10.2" cy="14.3" r="1.5" fill="#e81818"/></svg>
<span class="tt" style="left:310px">删除</span>
<div class="dd" style="left:344px;top:12px;border-top-color:#5f6368"></div>
<div class="sep" style="left:355px"></div>
<svg class="abs" style="left:362px;top:5px" width="18" height="17" viewBox="0 0 18 17"><rect x="4.8" y="1.2" width="12" height="11.2" fill="#f4f8fe" stroke="#5a8ae0" stroke-width=".8"/><rect x="4.8" y="1" width="12" height="2.6" fill="#4a86e8"/><path d="M17.3 2.5v10.4H6" stroke="#50607c" stroke-width=".9" fill="none"/><g fill="#fff" stroke="#1a4cd4" stroke-width="1.1"><rect x="1.3" y=".8" width="3.6" height="3.4"/><rect x="4.5" y="4" width="3.6" height="3.6"/><rect x="7.6" y="7.2" width="3.7" height="3.6"/><rect x="10.7" y="10.4" width="4" height="4"/></g><path d="M1 8.3v7.7l4.6-3.9z" fill="#3cb43c"/></svg>
<svg class="abs" style="left:384px;top:5px" width="18" height="17" viewBox="0 0 18 17"><rect x="4.8" y="1.2" width="12" height="11.2" fill="#b4b4b4" stroke="#6e6e6e" stroke-width=".8"/><rect x="4.8" y="1" width="12" height="2.6" fill="#6c6c6c"/><g fill="#a8a8a8" stroke="#606060" stroke-width="1.1"><rect x="1.3" y=".8" width="3.6" height="3.4"/><rect x="4.5" y="4" width="3.6" height="3.6"/><rect x="7.6" y="7.2" width="3.7" height="3.6"/><rect x="10.7" y="10.4" width="4" height="4"/></g><path d="M2 9v7M4.8 9v7" stroke="#686868" stroke-width="1.5"/></svg>
<div class="sep" style="left:407px"></div>
<svg class="abs" style="left:415px;top:5px" width="16" height="16" viewBox="0 0 16 16"><defs><linearGradient id="rg" x1="0" y1="0" x2="0" y2="1"><stop offset="0" stop-color="#f8fbff"/><stop offset="1" stop-color="#b8d0f8"/></linearGradient></defs><rect x="1.7" y="5.7" width="13" height="8.5" rx="2.5" fill="url(#rg)" stroke="#3f6fe0" stroke-width="1.3"/></svg>
<svg class="abs" style="left:436px;top:5px" width="18" height="16" viewBox="0 0 18 16"><rect x="3.8" y="6.2" width="13" height="8.3" rx="2.5" fill="url(#rg)" stroke="#3f6fe0" stroke-width="1.2"/><path d="M1 5.3L6 1.3v2.2h6.7v3.6H6v2.2z" fill="#3468dc" stroke="#1a44b0" stroke-width=".6"/></svg>
<svg class="abs" style="left:458px;top:5px" width="18" height="16" viewBox="0 0 18 16"><rect x="1.2" y="6.2" width="13" height="8.3" rx="2.5" fill="url(#rg)" stroke="#3f6fe0" stroke-width="1.2"/><path d="M17 5.3L12 1.3v2.2H5.3v3.6H12v2.2z" fill="#3468dc" stroke="#1a44b0" stroke-width=".6"/></svg>
<svg class="abs" style="left:480px;top:4px" width="18" height="17" viewBox="0 0 18 17"><rect x="4" y="7" width="13" height="9" rx="2.5" fill="#dbe7fb" stroke="#3f6fe0" stroke-width="1.1"/><rect x="1" y="4.5" width="13" height="9" rx="2.5" fill="url(#rg)" stroke="#3f6fe0" stroke-width="1.1"/><path d="M3.3 1.2l7 7M10.8 1.2l-7.3 8" stroke="#e81010" stroke-width="1.9"/><circle cx="3.7" cy="8.8" r="1.2" fill="#e81010"/></svg>
<div class="sep" style="left:503px"></div>
<svg class="abs" style="left:511px;top:5px" width="16" height="16" viewBox="0 0 16 16"><defs><linearGradient id="gg" x1="0" y1="0" x2="0" y2="1"><stop offset="0" stop-color="#44c444"/><stop offset="1" stop-color="#128a12"/></linearGradient></defs><rect x=".8" y=".8" width="14" height="14" rx="2" fill="url(#gg)" stroke="#0f7a0f" stroke-width=".8"/><path d="M3.5 7.8h8M8.2 4.3l3.5 3.5-3.5 3.5" stroke="#fff" stroke-width="1.7" fill="none"/></svg>
<div class="sep" style="left:533px"></div>
<svg class="abs" style="left:542px;top:6px" width="14" height="16" viewBox="0 0 14 16"><defs><linearGradient id="lk" x1="0" y1="0" x2="0" y2="1"><stop offset="0" stop-color="#9a9a9a"/><stop offset="1" stop-color="#6e6e6e"/></linearGradient></defs><path d="M3.5 7.5V4.3q0-1.9 1.9-1.9h2.4q1.9 0 1.9 1.9V7.5" fill="none" stroke="#6c6c6c" stroke-width="2.5"/><rect x=".7" y="6.7" width="12.4" height="8.3" rx="1" fill="url(#lk)" stroke="#585858" stroke-width=".8"/><path d="M6.9 8.3l2.1 2.3H7.8v1.6h1.1v1H4.9v-1H6v-1.6H4.8z" fill="#2e2e2e"/></svg>
<svg class="abs" style="left:562px;top:6px" width="17" height="16" viewBox="0 0 17 16"><path d="M2.3 5.5V4.3q0-1.9 1.9-1.9h2.4q1.9 0 1.9 1.9V7.5" fill="none" stroke="#6c6c6c" stroke-width="2.5"/><rect x="3.9" y="6.7" width="12.4" height="8.3" rx="1" fill="url(#lk)" stroke="#585858" stroke-width=".8"/><path d="M10.1 8.3l2.1 2.3H11v1.6h1.1v1H8.1v-1h1.1v-1.6H8z" fill="#2e2e2e"/></svg>
<svg class="abs" style="left:585px;top:4px" width="17" height="17" viewBox="0 0 17 17"><defs><linearGradient id="lky" x1="0" y1="0" x2="0" y2="1"><stop offset="0" stop-color="#ffec9a"/><stop offset="1" stop-color="#e8a41c"/></linearGradient></defs><path d="M1.4 8V6.7q0-1.9 1.9-1.9h2.4q1.9 0 1.9 1.9V9.5" fill="none" stroke="#d4b070" stroke-width="2.4"/><rect x="4" y="9" width="11.4" height="7.5" rx="1" fill="url(#lky)" stroke="#a87818" stroke-width=".8"/><path d="M9.7 10.3l2 2.1h-1.2v1.5h1.1v.9H7.8v-.9h1.1v-1.5H7.7z" fill="#3a3210"/><path d="M10.2 3.7h5M12.7 1.2v5" stroke="#3858a8" stroke-width="1.1"/></svg>
<div class="sep" style="left:607px"></div>
<svg class="abs" style="left:615px;top:5px" width="16" height="17" viewBox="0 0 16 17"><path d="M0 3.7h11.5M6.3 3.7v9h5.2" stroke="#6a6a6a" stroke-width="1.5" fill="none"/><path d="M10.8 .2l4.5 3.5-4.5 3.5zM10.8 9.2l4.5 3.5-4.5 3.5z" fill="#6a6a6a"/></svg>
<svg class="abs" style="left:637px;top:11px" width="16" height="11" viewBox="0 0 16 11"><path d="M0 1.9h14.8M10.5 2v5" stroke="#6a6a6a" stroke-width="1.6" fill="none"/><path d="M6.3 5.8h8.4L10.5 10.5z" fill="#6a6a6a"/></svg>
<svg class="abs" style="left:659px;top:4px" width="16" height="10" viewBox="0 0 16 10"><path d="M0 8.8h14.8M10.5 8.5V4" stroke="#6a6a6a" stroke-width="1.6" fill="none"/><path d="M6.3 5.2h8.4L10.5 .5z" fill="#6a6a6a"/></svg>
<svg class="abs" style="left:681px;top:11px" width="10" height="4" viewBox="0 0 10 4"><path d="M0 2h10" stroke="#6a6a6a" stroke-width="1.6"/></svg>
<svg class="abs" style="left:0;top:26px" width="691" height="20" viewBox="181 100 691 20"><defs><linearGradient id="tm" x1="0" y1="0" x2="0" y2="1"><stop offset="0" stop-color="#ffffff"/><stop offset=".45" stop-color="#f2f6fe"/><stop offset=".55" stop-color="#cfdcf8"/><stop offset="1" stop-color="#c3d3f6"/></linearGradient><linearGradient id="ts" x1="0" y1="0" x2="0" y2="1"><stop offset="0" stop-color="#fff8a6"/><stop offset=".58" stop-color="#fff094"/><stop offset=".66" stop-color="#ffdc7c"/><stop offset="1" stop-color="#ffd672"/></linearGradient><linearGradient id="ti" x1="0" y1="0" x2="0" y2="1"><stop offset="0" stop-color="#c6ece0"/><stop offset=".58" stop-color="#bce4d8"/><stop offset=".66" stop-color="#a9d1c3"/><stop offset="1" stop-color="#a5ccbe"/></linearGradient></defs><path d="M344.5 120V104q0-2 2-2h52q2 0 2 2v16z" fill="url(#ti)" stroke="#8fae9f" stroke-width="1"/><path d="M287.5 120V104q0-2 2-2h53q2 0 2 2v16z" fill="url(#ts)" stroke="#c9a848" stroke-width="1"/><path d="M197.5 120.5L215.3 102.7q1-1.2 3-1.2h67.2q2 0 2 2V120.5z" fill="url(#tm)" stroke="#6c7280" stroke-width="1"/><path d="M192.5 105.5v8.5l-5-4.2z" fill="none" stroke="#6a6f78" stroke-width="1"/><path d="M275 108.2l6.5 6.5M281.5 108.2l-6.5 6.5" stroke="#222" stroke-width="1.3"/></svg>
<span class="tab" style="left:45px;width:42px;font-weight:bold;font-size:11.8px;color:#0a0a18;top:28.5px">MAIN</span>
<span class="tab" style="left:112.5px;width:50px;font-size:10.4px;letter-spacing:-.5px;color:#0a0a18;top:28.5px">SBR_0</span>
<span class="tab" style="left:168px;width:50px;font-size:10.4px;letter-spacing:-.15px;color:#0a0a18;top:28.5px">INT_0</span>
</div>
<div id="gl"></div><div id="gut"></div><div id="bl"></div>
</div>
<svg id="dg" class="abs" style="left:0;top:0" width="872" height="937" viewBox="0 0 872 937">
<defs><linearGradient id="sepg" x1="200" x2="485" y1="0" y2="0" gradientUnits="userSpaceOnUse"><stop offset="0" stop-color="#808080"/><stop offset="0.5" stop-color="#bcbcbc"/><stop offset="1" stop-color="#ffffff"/></linearGradient>
<linearGradient id="sepg2" x1="200" x2="485" y1="0" y2="0" gradientUnits="userSpaceOnUse"><stop offset="0" stop-color="#9c9c9c"/><stop offset="0.5" stop-color="#cecece"/><stop offset="1" stop-color="#ffffff"/></linearGradient>
<linearGradient id="thg" x1="0" x2="0" y1="0" y2="1"><stop offset="0" stop-color="#e0e0e0"/><stop offset="0.4" stop-color="#c6c6c6"/><stop offset="0.8" stop-color="#a2a2a2"/><stop offset="1" stop-color="#8a8a8a"/></linearGradient></defs>
<g shape-rendering="crispEdges">
<rect x="184" y="133" width="688" height="1" fill="url(#sepg)"/>
<rect x="184" y="134" width="688" height="1" fill="url(#sepg2)"/>
<rect x="184" y="448" width="688" height="1" fill="url(#sepg)"/>
<rect x="184" y="449" width="688" height="1" fill="url(#sepg2)"/>
<rect x="184" y="725" width="688" height="1" fill="url(#sepg)"/>
<rect x="184" y="726" width="688" height="1" fill="url(#sepg2)"/>
<rect x="184" y="894" width="688" height="1" fill="url(#sepg)"/>
<rect x="184" y="895" width="688" height="1" fill="url(#sepg2)"/>
<rect x="210" y="121" width="2" height="8" fill="#000"/>
<rect x="210" y="138" width="2" height="305" fill="#000"/>
<rect x="210" y="453" width="2" height="267" fill="#000"/>
<rect x="210" y="730" width="2" height="159" fill="#000"/>
<rect x="210" y="899" width="2" height="38" fill="#000"/>
<rect x="212" y="187" width="33" height="2" fill="#000"/>
<rect x="245" y="178" width="2" height="20" fill="#000"/>
<rect x="276" y="178" width="2" height="20" fill="#000"/>
<rect x="278" y="187" width="138" height="2" fill="#000"/>
<rect x="212" y="241" width="33" height="2" fill="#000"/>
<rect x="245" y="232" width="2" height="20" fill="#000"/>
<rect x="276" y="232" width="2" height="20" fill="#000"/>
<rect x="278" y="241" width="138" height="2" fill="#000"/>
<rect x="417" y="162" width="91" height="176" fill="none" stroke="#000" stroke-width="2"/>
<rect x="412" y="277" width="4" height="2" fill="#000"/>
<rect x="412" y="295" width="4" height="2" fill="#000"/>
<rect x="412" y="313" width="4" height="2" fill="#000"/>
<rect x="412" y="331" width="4" height="2" fill="#000"/>
<rect x="509" y="277" width="5" height="2" fill="#000"/>
<rect x="509" y="295" width="5" height="2" fill="#000"/>
<rect x="218" y="400" width="654" height="17" fill="url(#thg)"/>
<rect x="218" y="417" width="654" height="15" fill="#fff"/>
<rect x="217" y="400" width="655" height="1" fill="#8a8a8a"/>
<rect x="217" y="417" width="655" height="1" fill="#6e6e6e"/>
<rect x="217" y="432" width="655" height="1" fill="#808080"/>
<rect x="217" y="400" width="1" height="33" fill="#7a7a7a"/>
<rect x="342" y="400" width="1" height="33" fill="#7a7a7a"/>
<rect x="442" y="400" width="1" height="33" fill="#7a7a7a"/>
<rect x="212" y="502" width="33" height="2" fill="#000"/>
<rect x="245" y="493" width="2" height="20" fill="#000"/>
<rect x="276" y="493" width="2" height="20" fill="#000"/>
<rect x="278" y="502" width="238" height="2" fill="#000"/>
<rect x="212" y="556" width="33" height="2" fill="#000"/>
<rect x="245" y="547" width="2" height="20" fill="#000"/>
<rect x="276" y="547" width="2" height="20" fill="#000"/>
<rect x="278" y="556" width="67" height="2" fill="#000"/>
<rect x="345" y="547" width="2" height="20" fill="#000"/>
<rect x="376" y="547" width="2" height="20" fill="#000"/>
<rect x="378" y="556" width="138" height="2" fill="#000"/>
<rect x="517" y="477" width="91" height="194" fill="none" stroke="#000" stroke-width="2"/>
<rect x="512" y="592" width="4" height="2" fill="#000"/>
<rect x="512" y="610" width="4" height="2" fill="#000"/>
<rect x="512" y="628" width="4" height="2" fill="#000"/>
<rect x="512" y="646" width="4" height="2" fill="#000"/>
<rect x="512" y="664" width="4" height="2" fill="#000"/>
<rect x="609" y="592" width="5" height="2" fill="#000"/>
<rect x="609" y="610" width="5" height="2" fill="#000"/>
<rect x="212" y="779" width="33" height="2" fill="#000"/>
<rect x="245" y="770" width="2" height="20" fill="#000"/>
<rect x="276" y="770" width="2" height="20" fill="#000"/>
<rect x="278" y="779" width="62" height="2" fill="#000"/>
<rect x="310" y="779" width="2" height="56" fill="#000"/>
<rect x="310" y="833" width="30" height="2" fill="#000"/>
<rect x="516" y="922" width="93" height="2" fill="#000"/>
<rect x="516" y="922" width="2" height="15" fill="#000"/><rect x="607" y="922" width="2" height="15" fill="#000"/>
</g>
<rect x="612.5" y="752.5" width="99" height="52" fill="none" stroke="#000" stroke-width="1" stroke-dasharray="1 1" shape-rendering="crispEdges"/>
<path d="M346.4 770.7 Q334 780 346.4 789.3" fill="none" stroke="#000" stroke-width="2.1"/>
<path d="M375.6 770.7 Q388 780 375.6 789.3" fill="none" stroke="#000" stroke-width="2.1"/>
<path d="M346.4 824.7 Q334 834 346.4 843.3" fill="none" stroke="#000" stroke-width="2.1"/>
<path d="M375.6 824.7 Q388 834 375.6 843.3" fill="none" stroke="#000" stroke-width="2.1"/>
<text x="192" y="149" text-anchor="start" fill="#000" stroke="#000" stroke-width=".2" font-size="11" font-weight="bold">2</text>
<text x="192" y="464" text-anchor="start" fill="#000" stroke="#000" stroke-width=".2" font-size="11" font-weight="bold">3</text>
<text x="192" y="741" text-anchor="start" fill="#000" stroke="#000" stroke-width=".2" font-size="11" font-weight="bold">4</text>
<text x="192" y="910" text-anchor="start" fill="#000" stroke="#000" stroke-width=".2" font-size="11" font-weight="bold">5</text>
<text x="218" y="149" text-anchor="start" fill="#808080" stroke="#808080" stroke-width=".2" font-size="12">输入注释</text>
<text x="217" y="464" text-anchor="start" fill="#008000" stroke="#008000" stroke-width=".2" font-size="12" letter-spacing="-0.3">把VW 100的值写入到412801的地址里面</text>
<text x="218" y="741" text-anchor="start" fill="#808080" stroke="#808080" stroke-width=".2" font-size="12">输入注释</text>
<text x="218" y="910" text-anchor="start" fill="#808080" stroke="#808080" stroke-width=".2" font-size="12">输入注释</text>
<text x="262.7" y="174" text-anchor="middle" fill="#000" stroke="#000" stroke-width=".2" font-size="11" letter-spacing="-0.2">Always_On:SM0.0</text>
<text x="262.7" y="228" text-anchor="middle" fill="#000" stroke="#000" stroke-width=".2" font-size="11" letter-spacing="-0.2">Always_On:SM0.0</text>
<text x="462.3" y="174" text-anchor="middle" fill="#000" stroke="#000" stroke-width=".2" font-size="11" letter-spacing="-0.36">MBUS_CTRL</text>
<text x="421" y="192" text-anchor="start" fill="#000" stroke="#000" stroke-width=".2" font-size="11" letter-spacing="-0.28">EN</text>
<text x="421" y="246" text-anchor="start" fill="#000" stroke="#000" stroke-width=".2" font-size="11" letter-spacing="-0.28">Mode</text>
<text x="421" y="282" text-anchor="start" fill="#000" stroke="#000" stroke-width=".2" font-size="11" letter-spacing="-0.28">Baud</text>
<text x="410.5" y="282" text-anchor="end" fill="#808000" stroke="#808000" stroke-width=".2" font-size="11" letter-spacing="-0.28">9600</text>
<text x="421" y="300" text-anchor="start" fill="#000" stroke="#000" stroke-width=".2" font-size="11" letter-spacing="-0.28">Parity</text>
<text x="410.5" y="300" text-anchor="end" fill="#808000" stroke="#808000" stroke-width=".2" font-size="11" letter-spacing="-0.28">2</text>
<text x="421" y="318" text-anchor="start" fill="#000" stroke="#000" stroke-width=".2" font-size="11" letter-spacing="-0.28">Port</text>
<text x="410.5" y="318" text-anchor="end" fill="#808000" stroke="#808000" stroke-width=".2" font-size="11" letter-spacing="-0.28">0</text>
<text x="421" y="336" text-anchor="start" fill="#000" stroke="#000" stroke-width=".2" font-size="11" letter-spacing="-0.28">Timeout</text>
<text x="410.5" y="336" text-anchor="end" fill="#808000" stroke="#808000" stroke-width=".2" font-size="11" letter-spacing="-0.28">1000</text>
<text x="505.5" y="282" text-anchor="end" fill="#000" stroke="#000" stroke-width=".2" font-size="11" letter-spacing="-0.28">Done</text>
<text x="505.5" y="300" text-anchor="end" fill="#000" stroke="#000" stroke-width=".2" font-size="11" letter-spacing="-0.28">Error</text>
<text x="515" y="282" text-anchor="start" fill="#000" stroke="#000" stroke-width=".2" font-size="11" letter-spacing="-0.28">V0.0</text>
<text x="515" y="300" text-anchor="start" fill="#000" stroke="#000" stroke-width=".2" font-size="11" letter-spacing="-0.28">VB10</text>
<text x="221" y="413.5" text-anchor="start" fill="#000" stroke="#000" stroke-width=".2" font-size="12">符号</text>
<text x="347" y="413.5" text-anchor="start" fill="#000" stroke="#000" stroke-width=".2" font-size="12">地址</text>
<text x="447" y="413.5" text-anchor="start" fill="#000" stroke="#000" stroke-width=".2" font-size="12">注释</text>
<text x="222" y="429" text-anchor="start" fill="#000" stroke="#000" stroke-width=".2" font-size="11" letter-spacing="-0.2">Always_On</text>
<text x="347" y="429" text-anchor="start" fill="#000" stroke="#000" stroke-width=".2" font-size="11" letter-spacing="-0.28">SM0.0</text>
<text x="447" y="429.5" text-anchor="start" fill="#008000" stroke="#008000" stroke-width=".2" font-size="12">始终接通</text>
<text x="262" y="489" text-anchor="middle" fill="#000" stroke="#000" stroke-width=".2" font-size="11" letter-spacing="-0.28">V1.0</text>
<text x="262" y="543" text-anchor="middle" fill="#000" stroke="#000" stroke-width=".2" font-size="11" letter-spacing="-0.28">V1.0</text>
<text x="362" y="561" text-anchor="middle" fill="#000" stroke="#000" stroke-width=".2" font-size="11" letter-spacing="-0.28">P</text>
<text x="562.3" y="489" text-anchor="middle" fill="#000" stroke="#000" stroke-width=".2" font-size="11" letter-spacing="-0.36">MBUS_MSG</text>
<text x="521" y="507" text-anchor="start" fill="#000" stroke="#000" stroke-width=".2" font-size="11" letter-spacing="-0.28">EN</text>
<text x="521" y="561" text-anchor="start" fill="#000" stroke="#000" stroke-width=".2" font-size="11" letter-spacing="-0.28">First</text>
<text x="521" y="597" text-anchor="start" fill="#000" stroke="#000" stroke-width=".2" font-size="11" letter-spacing="-0.28">Slave</text>
<text x="510" y="597" text-anchor="end" fill="#808000" stroke="#808000" stroke-width=".2" font-size="11" letter-spacing="-0.28">2</text>
<text x="521" y="615" text-anchor="start" fill="#000" stroke="#000" stroke-width=".2" font-size="11" letter-spacing="-0.28">RW</text>
<text x="510" y="615" text-anchor="end" fill="#808000" stroke="#808000" stroke-width=".2" font-size="11" letter-spacing="-0.28">1</text>
<text x="521" y="633" text-anchor="start" fill="#000" stroke="#000" stroke-width=".2" font-size="11" letter-spacing="-0.28">Addr</text>
<text x="510" y="633" text-anchor="end" fill="#808000" stroke="#808000" stroke-width=".2" font-size="11" letter-spacing="-0.28">412801</text>
<text x="521" y="651" text-anchor="start" fill="#000" stroke="#000" stroke-width=".2" font-size="11" letter-spacing="-0.28">Count</text>
<text x="510" y="651" text-anchor="end" fill="#808000" stroke="#808000" stroke-width=".2" font-size="11" letter-spacing="-0.28">1</text>
<text x="521" y="669" text-anchor="start" fill="#000" stroke="#000" stroke-width=".2" font-size="11" letter-spacing="-0.28">DataPtr</text>
<text x="510" y="669" text-anchor="end" fill="#000" stroke="#000" stroke-width=".2" font-size="11" letter-spacing="-0.28">&amp;VB100</text>
<text x="605.5" y="597" text-anchor="end" fill="#000" stroke="#000" stroke-width=".2" font-size="11" letter-spacing="-0.28">Done</text>
<text x="605.5" y="615" text-anchor="end" fill="#000" stroke="#000" stroke-width=".2" font-size="11" letter-spacing="-0.28">Error</text>
<text x="615" y="597" text-anchor="start" fill="#000" stroke="#000" stroke-width=".2" font-size="11" letter-spacing="-0.28">V0.1</text>
<text x="615" y="615" text-anchor="start" fill="#000" stroke="#000" stroke-width=".2" font-size="11" letter-spacing="-0.28">VB11</text>
<text x="262" y="766" text-anchor="middle" fill="#000" stroke="#000" stroke-width=".2" font-size="11" letter-spacing="-0.28">V0.1</text>
<text x="362" y="766" text-anchor="middle" fill="#000" stroke="#000" stroke-width=".2" font-size="11" letter-spacing="-0.28">V1.0</text>
<text x="362" y="784" text-anchor="middle" fill="#000" stroke="#000" stroke-width=".2" font-size="11" letter-spacing="-0.28">R</text>
<text x="362" y="802" text-anchor="middle" fill="#808000" stroke="#808000" stroke-width=".2" font-size="11" letter-spacing="-0.28">1</text>
<text x="362" y="820" text-anchor="middle" fill="#000" stroke="#000" stroke-width=".2" font-size="11" letter-spacing="-0.28">V1.1</text>
<text x="362" y="838" text-anchor="middle" fill="#000" stroke="#000" stroke-width=".2" font-size="11" letter-spacing="-0.28">S</text>
<text x="362" y="856" text-anchor="middle" fill="#808000" stroke="#808000" stroke-width=".2" font-size="11" letter-spacing="-0.28">1</text>
<text x="262" y="935" text-anchor="middle" fill="#000" stroke="#000" stroke-width=".2" font-size="11" letter-spacing="-0.28">V1.1</text>
<text x="562.3" y="935" text-anchor="middle" fill="#000" stroke="#000" stroke-width=".2" font-size="11" letter-spacing="-0.36">MBUS_MSG</text>
</svg>
</body>
</html>
